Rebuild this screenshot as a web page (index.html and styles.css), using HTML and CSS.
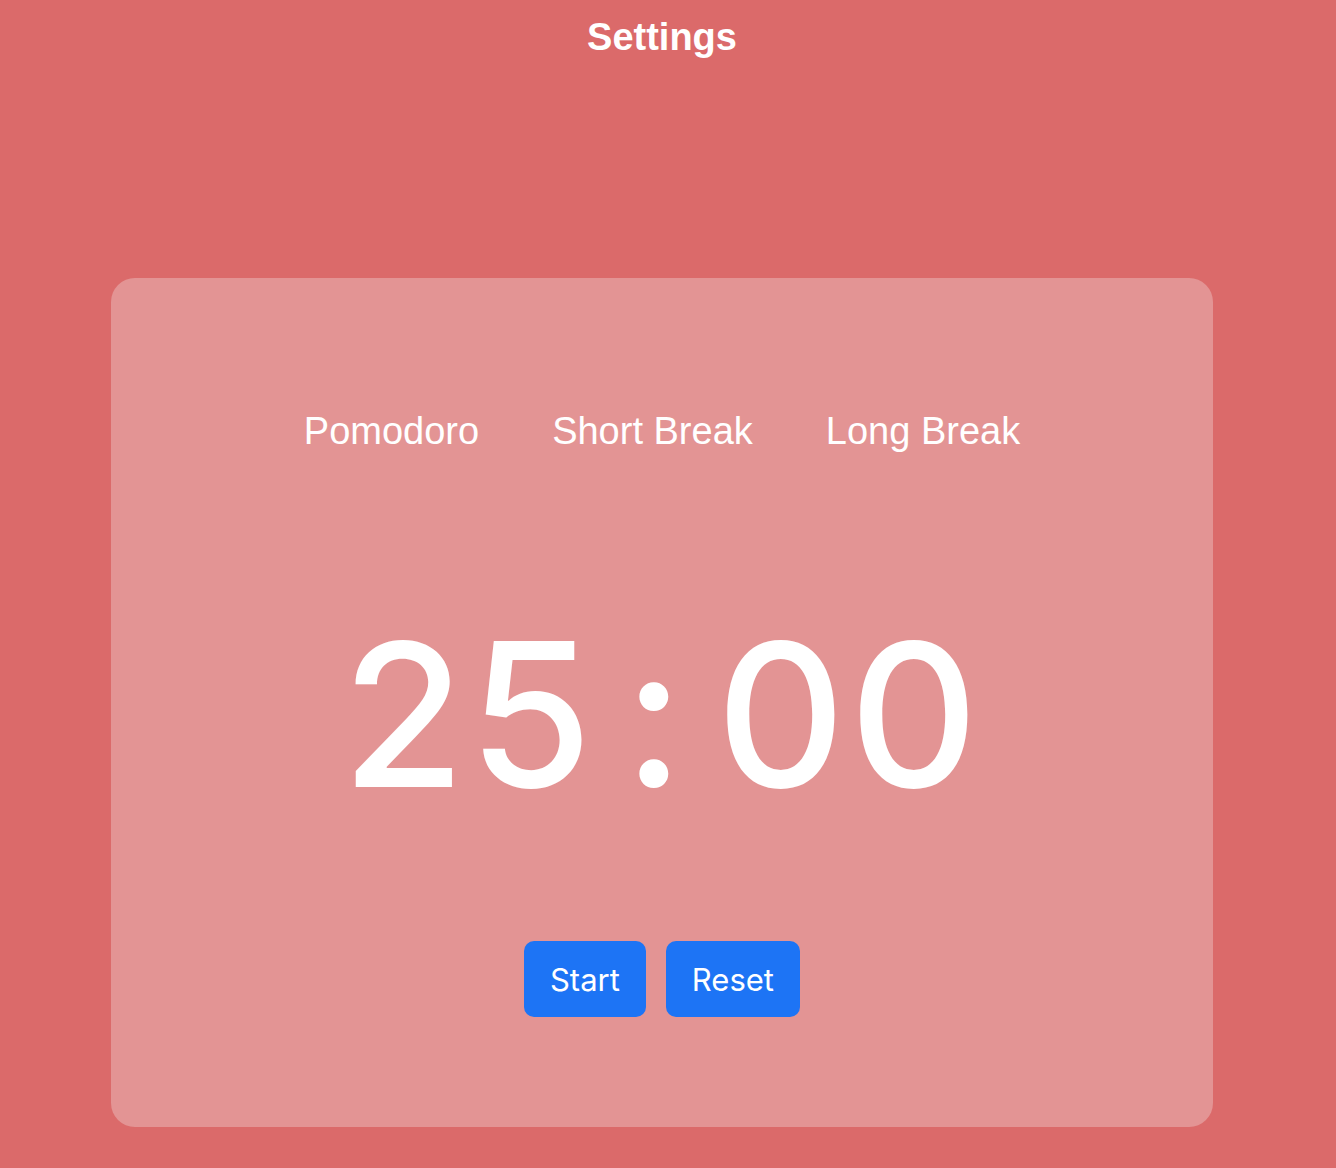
FILE: index.html
```html
<!DOCTYPE html>
<html lang="en">
<head>
<meta charset="utf-8">
<title>Pomodoro</title>
<link rel="stylesheet" href="styles.css">
</head>
<body>
<div class="page">
  <header class="header">
    <h1 class="settings">Settings</h1>
  </header>
  <main class="card">
    <nav class="tabs">
      <span class="tab">Pomodoro</span>
      <span class="tab">Short Break</span>
      <span class="tab">Long Break</span>
    </nav>
    <div class="timer">
      <span class="digits">25</span>
      <span class="colon">:</span>
      <span class="digits">00</span>
    </div>
    <div class="actions">
      <button class="btn btn-start">Start</button>
      <button class="btn btn-reset">Reset</button>
    </div>
  </main>
</div>
</body>
</html>
```
FILE: styles.css
```css
html, body {
  margin: 0;
  padding: 0;
}
body {
  background: #db6a6a;
  color: #fff;
  font-family: "Liberation Sans", Arial, sans-serif;
  height: 1168px;
  overflow: hidden;
}
.page {
  width: 1324px;
}
.header {
  display: flex;
  justify-content: center;
  padding-top: 14px;
}
.settings {
  margin: 0;
  font-size: 38px;
  line-height: 46px;
  font-weight: bold;
}
.card {
  width: 1102px;
  margin: 218px auto 0;
  height: 849px;
  box-sizing: border-box;
  background: #e39494;
  border-radius: 24px;
  display: flex;
  flex-direction: column;
  align-items: center;
  padding-top: 131px;
}
.tabs {
  display: flex;
  gap: 73px;
  font-size: 38px;
  line-height: 44px;
}
.timer {
  margin-top: 161px;
  display: flex;
  align-items: baseline;
  font-family: Inter, sans-serif;
  font-size: 200px;
  line-height: 200px;
  font-weight: 500;
  font-feature-settings: "calt" 0;
}
.digits {
  letter-spacing: 4px;
}
.colon {
  margin: 0 32px 0 27px;
  font-feature-settings: "calt" 0, "case" 0;
}
.actions {
  margin-top: 127px;
  display: flex;
  gap: 20px;
}
.btn {
  font-family: Inter, sans-serif;
  font-size: 31px;
  color: #fff;
  background: #1d74f5;
  border: none;
  border-radius: 10px;
  height: 76px;
  padding: 0 26px;
}
```
